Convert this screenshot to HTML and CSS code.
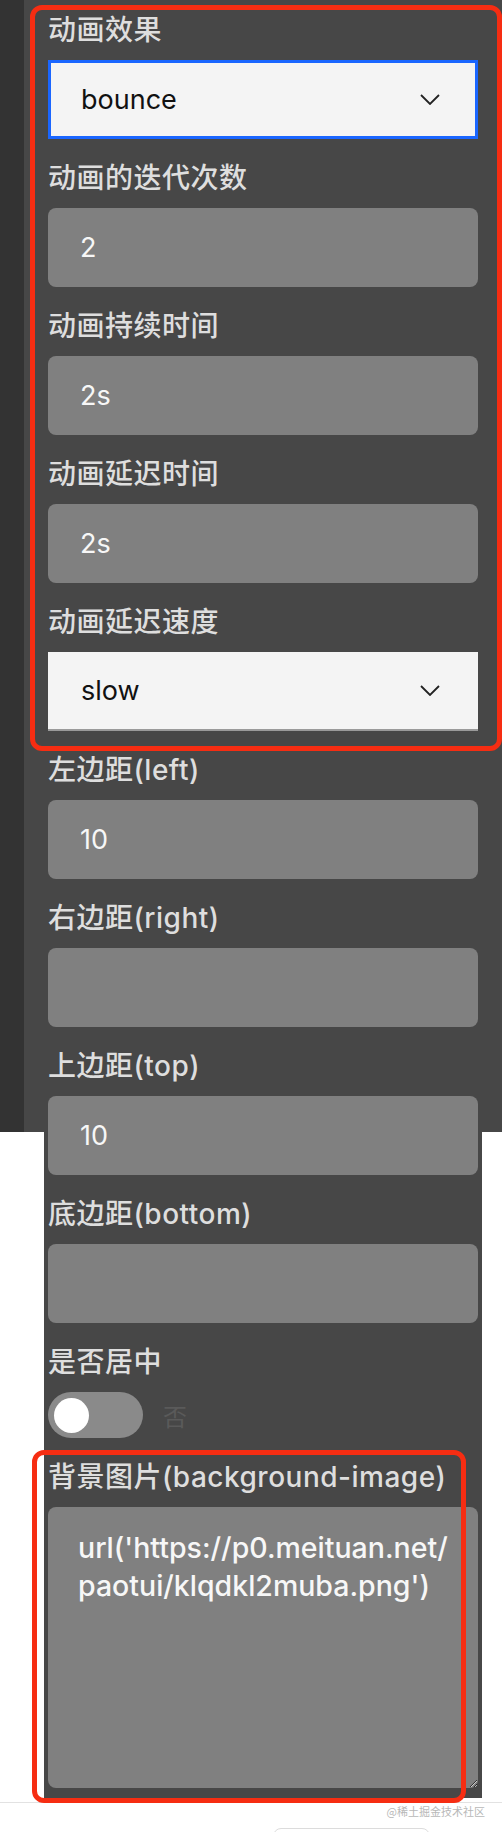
FILE: index.html
```html
<!DOCTYPE html>
<html lang="zh-CN">
<head>
<meta charset="utf-8">
<title>动画配置</title>
<link rel="stylesheet" href="styles.css">
</head>
<body>
<div class="page">
  <div class="form">
    <div class="field">
      <div class="label">动画效果</div>
      <div class="select select-focused">
        <span>bounce</span>
        <svg class="chevron" width="20" height="11" viewBox="0 0 20 11"><path d="M1 1 L10 10 L19 1" fill="none" stroke="#222" stroke-width="1.8"/></svg>
      </div>
    </div>
    <div class="field">
      <div class="label">动画的迭代次数</div>
      <div class="input">2</div>
    </div>
    <div class="field">
      <div class="label">动画持续时间</div>
      <div class="input">2s</div>
    </div>
    <div class="field">
      <div class="label">动画延迟时间</div>
      <div class="input">2s</div>
    </div>
    <div class="field">
      <div class="label">动画延迟速度</div>
      <div class="select select-plain">
        <span>slow</span>
        <svg class="chevron" width="20" height="11" viewBox="0 0 20 11"><path d="M1 1 L10 10 L19 1" fill="none" stroke="#222" stroke-width="1.8"/></svg>
      </div>
    </div>
    <div class="field">
      <div class="label">左边距(left)</div>
      <div class="input">10</div>
    </div>
    <div class="field">
      <div class="label">右边距(right)</div>
      <div class="input"></div>
    </div>
    <div class="field">
      <div class="label">上边距(top)</div>
      <div class="input">10</div>
    </div>
    <div class="field">
      <div class="label">底边距(bottom)</div>
      <div class="input"></div>
    </div>
    <div class="field">
      <div class="label">是否居中</div>
      <div class="switch-row">
        <div class="switch"><div class="knob"></div></div>
        <span class="switch-text">否</span>
      </div>
    </div>
    <div class="field field-last">
      <div class="label">背景图片(background-image)</div>
      <textarea class="textarea">url('https://p0.meituan.net/
paotui/klqdkl2muba.png')</textarea>
    </div>
  </div>
  <div class="footer">
    <div class="watermark">@稀土掘金技术社区</div>
    <div class="footer-btn"></div>
  </div>
  <div class="mark mark-1"></div>
  <div class="mark mark-2"></div>
</div>
</body>
</html>
```
FILE: styles.css
```css
* { box-sizing: border-box; }
html, body { margin: 0; padding: 0; }
body {
  background: #ffffff;
  font-family: "Inter", "Noto Sans CJK SC", sans-serif;
  overflow: hidden;
}
.page {
  position: relative;
  width: 502px;
  height: 1832px;
  background: linear-gradient(to right, #333333 0, #333333 24px, #474747 24px, #474747 100%) top left / 100% 1132px no-repeat;
}
.form {
  margin-left: 44px;
  width: 438px;
  background: #474747;
  padding: 11px 4px 10px 4px;
}
.field { margin-bottom: 20px; }
.field-last { margin-bottom: 0; }
.label {
  font-size: 28px;
  line-height: 38px;
  height: 38px;
  font-weight: 500;
  letter-spacing: 0.5px;
  color: #dedede;
  margin-bottom: 11px;
  white-space: nowrap;
}
.input {
  height: 79px;
  border-radius: 8px;
  background: #808080;
  color: #f7f7f7;
  font-size: 27px;
  padding-left: 32px;
  display: flex;
  align-items: center;
}
.select {
  height: 79px;
  background: #f4f4f4;
  color: #111;
  font-size: 27px;
  display: flex;
  align-items: center;
  justify-content: space-between;
  padding-right: 38px;
}
.select-focused {
  border: 3px solid #1a66ff;
  padding-left: 30px;
  padding-right: 35px;
}
.select-plain {
  padding-left: 33px;
  border-bottom: 2px solid #9a9a9a;
}
.chevron { display: block; }
.switch-row {
  display: flex;
  align-items: center;
  gap: 20px;
  height: 46px;
}
.switch {
  width: 95px;
  height: 46px;
  border-radius: 23px;
  background: #8a8a8a;
  display: flex;
  align-items: center;
  padding-left: 6px;
}
.knob {
  width: 35px;
  height: 35px;
  border-radius: 50%;
  background: #ffffff;
}
.switch-text {
  font-size: 24px;
  color: #5a5a5a;
  font-family: "Noto Sans CJK SC", sans-serif;
}
.textarea {
  display: block;
  width: 430px;
  height: 281px;
  margin: 0;
  border: none;
  outline: none;
  border-radius: 8px;
  background: #808080;
  color: #f7f7f7;
  font-family: "Inter", "Noto Sans CJK SC", sans-serif;
  font-size: 28.5px;
  font-weight: 500;
  line-height: 38px;
  padding: 22px 10px 0 30px;
  white-space: pre;
  overflow: hidden;
  resize: both;
}
.footer {
  margin-top: 4px;
  border-top: 1px solid #e2e2e2;
  height: 30px;
}
.watermark {
  font-family: "Noto Sans CJK SC", sans-serif;
  font-size: 11px;
  line-height: 12px;
  color: #b8b8b8;
  text-align: right;
  padding-right: 17px;
  margin-top: 2px;
}
.footer-btn {
  margin-left: 273px;
  margin-top: 11px;
  width: 157px;
  height: 30px;
  border: 1px solid #dcdcdc;
  border-radius: 8px;
}
.mark {
  position: absolute;
  border: 5px solid #f62d12;
  border-radius: 12px;
  pointer-events: none;
}
.mark-1 { left: 30px; top: 5px; width: 472px; height: 746px; }
.mark-2 { left: 32px; top: 1450px; width: 434px; height: 353px; }
```
